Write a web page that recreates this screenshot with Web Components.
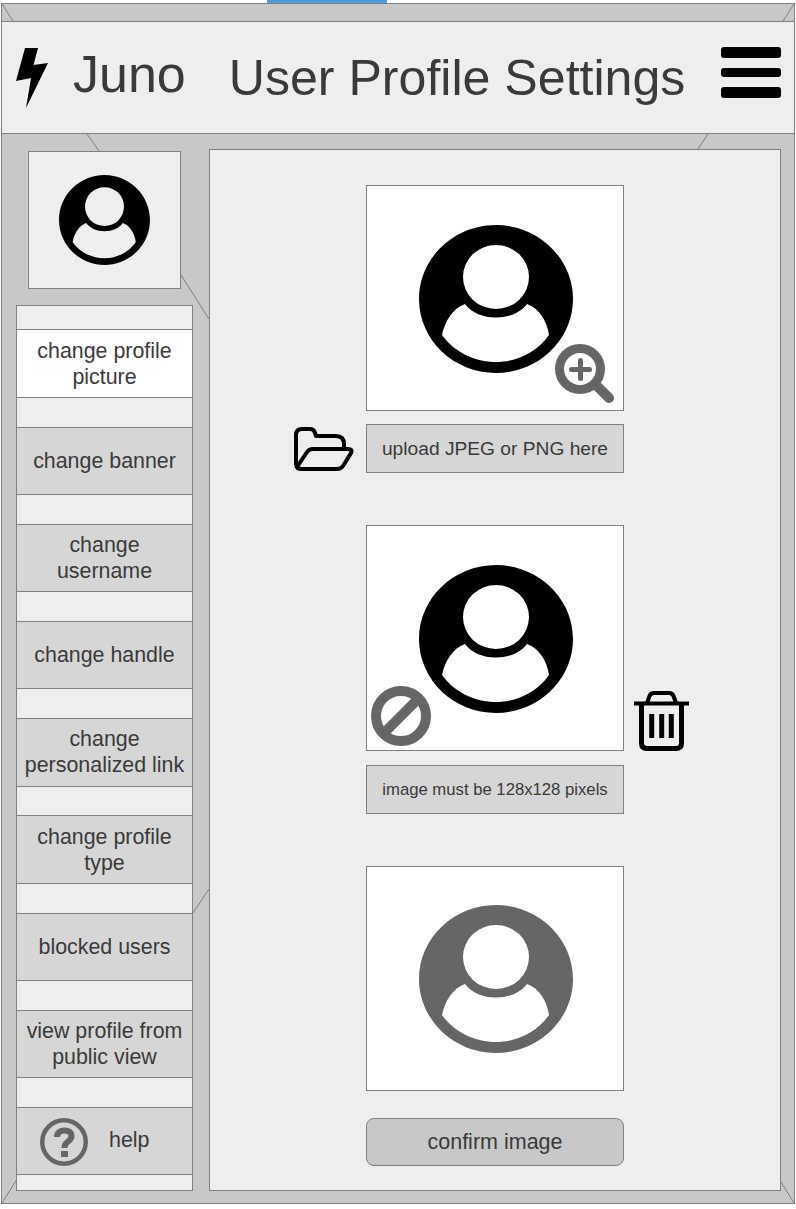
<!DOCTYPE html>
<html lang="en">
<head>
<meta charset="utf-8">
<title>Juno - User Profile Settings</title>
<style>
  html, body { margin: 0; background: #fff; }
  body { font-family: "Liberation Sans", Arial, sans-serif; color: #3a3a3a; }
</style>
</head>
<body>
<juno-progress></juno-progress>
<juno-frame>
  <juno-header slot="header" title-text="User Profile Settings"></juno-header>
  <juno-sidebar slot="sidebar">
    <juno-nav-item active>change profile<br>picture</juno-nav-item>
    <juno-nav-item>change banner</juno-nav-item>
    <juno-nav-item>change<br>username</juno-nav-item>
    <juno-nav-item>change handle</juno-nav-item>
    <juno-nav-item>change<br>personalized link</juno-nav-item>
    <juno-nav-item>change profile<br>type</juno-nav-item>
    <juno-nav-item>blocked users</juno-nav-item>
    <juno-nav-item>view profile from<br>public view</juno-nav-item>
    <juno-nav-item help>help</juno-nav-item>
  </juno-sidebar>
  <juno-settings slot="main">
    <juno-row>
      <juno-image-box>
        <juno-icon slot="overlay" name="zoom" style="right:8px;bottom:6px"></juno-icon>
      </juno-image-box>
    </juno-row>
    <juno-row center style="margin-top:13px">
      <juno-icon slot="left" name="folder"></juno-icon>
      <juno-caption>upload JPEG or PNG here</juno-caption>
    </juno-row>
    <juno-row style="margin-top:52px">
      <juno-image-box>
        <juno-icon slot="overlay" name="ban" style="left:4px;bottom:4px"></juno-icon>
      </juno-image-box>
      <juno-icon slot="right" name="trash"></juno-icon>
    </juno-row>
    <juno-row style="margin-top:14px">
      <juno-caption small>image must be 128x128 pixels</juno-caption>
    </juno-row>
    <juno-row style="margin-top:52px">
      <juno-image-box muted></juno-image-box>
    </juno-row>
    <juno-row style="margin-top:27px">
      <juno-button>confirm image</juno-button>
    </juno-row>
  </juno-settings>
</juno-frame>

<script>
const borderColor = "#808080";
const avatarPath =
  "M77 0C119 0 154 33 154 74C154 115 119 148 77 148C35 148 0 115 0 74C0 33 35 0 77 0Z" +
  "M77 20A33 32 0 1 0 77 84A33 32 0 1 0 77 20Z" +
  "M23 110C26 96 34 83 46 79C53 88 64 92.500 77 92.500C90 92.500 101 88 108 79C120 83 128 96 130 110" +
  "C118 127 98 137 77 137C56 137 35 127 23 110Z";

const icons = {
  zoom: `<svg width="60" height="60" viewBox="0 0 60 60" fill="none" stroke="#666">
      <circle cx="25" cy="25" r="20.500" stroke-width="9"/>
      <path d="M16.500 25.500H34.500M25.500 16.500V34.500" stroke-width="5" stroke-linecap="round"/>
      <path d="M41 41L54 54" stroke-width="10" stroke-linecap="round"/>
    </svg>`,
  ban: `<svg width="60" height="60" viewBox="0 0 60 60" fill="none" stroke="#666" stroke-width="10">
      <circle cx="30" cy="30" r="25"/>
      <path d="M14 46L46 14"/>
    </svg>`,
  folder: `<svg width="60" height="44" viewBox="0 0 60 44" fill="none" stroke="#000" stroke-width="4" stroke-linejoin="round">
      <path d="M2 38V8Q2 2 8 2H16Q20 2 21 6L22 9H42Q50 9 50 17V21"/>
      <path d="M3 40L13 25Q15 22 19 22H54Q59 22 57 26L49 39Q47 42 43 42H7Q3 42 2 38"/>
    </svg>`,
  trash: `<svg width="55" height="60" viewBox="0 0 55 60" fill="none" stroke="#000">
      <path d="M0 12.500H55" stroke-width="4"/>
      <path d="M13 12L15.500 5Q16.500 2 20 2H35Q38.500 2 39.500 5L42 12" stroke-width="4"/>
      <path d="M7.500 13V52Q7.500 57.500 13 57.500H42Q47.500 57.500 47.500 52V13" stroke-width="5"/>
      <path d="M17.700 23V47M27.700 23V47M37.300 23V47" stroke-width="5"/>
    </svg>`,
  help: `<svg width="48" height="48" viewBox="0 0 48 48" fill="none" stroke="#666">
      <circle cx="24" cy="24" r="21.750" stroke-width="4.500"/>
      <path d="M17 19C17 14.500 20 12.500 24.500 12.500C29 12.500 31.500 14.500 31.500 18C31.500 21.500 28.500 23 27 24.500C25.500 25.500 24.500 27 24.500 30" stroke-width="6"/>
      <rect x="21" y="33" width="7" height="6" fill="#666" stroke="none"/>
    </svg>`,
};

// every element is the same thing: a template in a shadow root
class JunoElement extends HTMLElement {
  constructor(html) {
    super();
    this.attachShadow({ mode: "open" });
    this.shadowRoot.innerHTML = html;
  }
}

class JunoProgress extends JunoElement {
  constructor() {
    super(`<style>
      :host { display: block; width: 120px; height: 3px; margin-left: 267px; background: #4d9de0; }
    </style>`);
  }
}

class JunoFrame extends JunoElement {
  constructor() {
    super(`<style>
      :host {
        display: flex; flex-direction: column; position: relative; box-sizing: border-box;
        width: 794px; height: 1201px; margin-left: 1px; padding-top: 17px;
        background: #c8c8c8; border: 1px solid ${borderColor};
      }
      .body { flex: 1; display: flex; gap: 16px; padding: 15px 13px 12px 14px; min-height: 0; }
      svg { position: absolute; left: -2px; top: -4px; pointer-events: none; }
    </style>
    <slot name="header"></slot>
    <div class="body">
      <slot name="sidebar"></slot>
      <slot name="main"></slot>
    </div>
    <svg width="796" height="1209" viewBox="0 0 796 1209" stroke="${borderColor}" fill="none">
      <path d="M2 4L13 21M794 4L783 21M87 134L99 151M708 134L698 149"/>
      <path d="M181 275L209 319M193 913L209 889M2 1203L16.500 1180M781 1182L794 1203"/>
    </svg>`);
  }
}

class JunoHeader extends JunoElement {
  constructor() {
    super(`<style>
      :host {
        display: flex; align-items: center; box-sizing: border-box; height: 113px;
        padding: 0 13px 0 14px; background: #eee;
        border-top: 1px solid ${borderColor}; border-bottom: 1px solid ${borderColor};
      }
      svg { flex: none; }
      .brand { font-size: 52px; margin: 0 43px 7px 25px; }
      .title { font-size: 50.100px; padding-top: 1px; white-space: nowrap; }
      .menu { display: flex; flex-direction: column; margin: 0 0 10px auto; width: 60px; }
      .menu i { display: block; background: #000; border-radius: 3px; }
    </style>
    <svg width="32" height="60" viewBox="0 0 32 60">
      <path d="M9 0H22L17.500 17L32 15L10 60L15 30L0 33Z"/>
    </svg>
    <span class="brand">Juno</span>
    <span class="title"></span>
    <div class="menu">
      <i style="height:11px"></i>
      <i style="height:9px;margin-top:10px"></i>
      <i style="height:11px;margin-top:10px"></i>
    </div>`);
  }
  connectedCallback() {
    this.shadowRoot.querySelector(".title").textContent = this.getAttribute("title-text");
  }
}

class JunoAvatar extends JunoElement {
  constructor() {
    super(`<style>
      :host { display: block; line-height: 0; }
      svg { fill: var(--avatar-fill, #000); }
    </style>
    <svg viewBox="0 0 154 148" preserveAspectRatio="none"><path fill-rule="evenodd" d="${avatarPath}"/></svg>`);
  }
  connectedCallback() {
    const svg = this.shadowRoot.querySelector("svg");
    svg.setAttribute("width", this.getAttribute("width") || 154);
    svg.setAttribute("height", this.getAttribute("height") || 148);
  }
}

class JunoSidebar extends JunoElement {
  constructor() {
    super(`<style>
      :host { display: flex; flex-direction: column; flex: none; width: 177px; height: 100%; }
      .picture {
        box-sizing: border-box; width: 153px; height: 138px; margin: 2px 0 16px 12px;
        display: flex; align-items: center; justify-content: center;
        background: #eee; border: 1px solid ${borderColor};
      }
      nav {
        flex: 1; box-sizing: border-box; display: flex; flex-direction: column; gap: 28.800px;
        padding-top: 23.400px; background: #eee; border: 1px solid ${borderColor};
      }
    </style>
    <div class="picture"><juno-avatar width="91" height="90"></juno-avatar></div>
    <nav><slot></slot></nav>`);
  }
}

class JunoNavItem extends JunoElement {
  constructor() {
    super(`<style>
      :host {
        display: flex; align-items: center; justify-content: center; box-sizing: border-box;
        height: 68.400px; text-align: center; font-size: 21.400px; line-height: 26px;
        background: #d6d6d6; border-top: 1px solid ${borderColor}; border-bottom: 1px solid ${borderColor};
      }
      :host([active]) { background: #fff; }
      :host([help]) { justify-content: flex-start; padding-left: 23px; gap: 21px; }
      .icon { display: none; line-height: 0; margin-top: 2px; }
      :host([help]) .icon { display: block; }
      :host([help]) .label { margin-bottom: 2px; }
    </style>
    <span class="icon">${icons.help}</span>
    <span class="label"><slot></slot></span>`);
  }
}

class JunoSettings extends JunoElement {
  constructor() {
    super(`<style>
      :host {
        display: flex; flex-direction: column; flex: 1; box-sizing: border-box; height: 100%;
        padding: 35px 0 0 84px; background: #eee; border: 1px solid ${borderColor};
      }
    </style>
    <slot></slot>`);
  }
}

class JunoRow extends JunoElement {
  constructor() {
    super(`<style>
      :host { display: flex; align-items: flex-end; }
      :host([center]) { align-items: center; }
      .left { flex: none; width: 60px; margin-right: 12px; line-height: 0; }
      .right { margin-left: 10px; line-height: 0; }
    </style>
    <div class="left"><slot name="left"></slot></div>
    <slot></slot>
    <div class="right"><slot name="right"></slot></div>`);
  }
}

class JunoImageBox extends JunoElement {
  constructor() {
    super(`<style>
      :host {
        display: flex; align-items: center; justify-content: center; position: relative;
        box-sizing: border-box; width: 258px; height: 226px; padding: 2px 0 0 2px;
        background: #fff; border: 1px solid ${borderColor};
      }
      :host([muted]) { height: 225px; padding-top: 1px; --avatar-fill: #666; }
    </style>
    <juno-avatar></juno-avatar>
    <slot name="overlay"></slot>`);
  }
}

class JunoIcon extends JunoElement {
  constructor() {
    super(`<style>
      :host { display: inline-block; line-height: 0; }
      :host([slot="overlay"]) { position: absolute; }
    </style>
    <span></span>`);
  }
  connectedCallback() {
    this.shadowRoot.querySelector("span").innerHTML = icons[this.getAttribute("name")];
  }
}

class JunoCaption extends JunoElement {
  constructor() {
    super(`<style>
      :host {
        display: flex; align-items: center; justify-content: center; box-sizing: border-box;
        width: 258px; height: 49px; font-size: 19.200px; white-space: nowrap;
        background: #d6d6d6; border: 1px solid ${borderColor};
      }
      :host([small]) { font-size: 16.700px; }
    </style>
    <slot></slot>`);
  }
}

class JunoButton extends JunoElement {
  constructor() {
    super(`<style>
      :host {
        display: flex; align-items: center; justify-content: center; box-sizing: border-box;
        width: 258px; height: 48px; font-size: 21.500px; cursor: pointer;
        background: #c8c8c8; border: 1px solid ${borderColor}; border-radius: 8px;
      }
    </style>
    <slot></slot>`);
  }
}

customElements.define("juno-progress", JunoProgress);
customElements.define("juno-frame", JunoFrame);
customElements.define("juno-header", JunoHeader);
customElements.define("juno-avatar", JunoAvatar);
customElements.define("juno-sidebar", JunoSidebar);
customElements.define("juno-nav-item", JunoNavItem);
customElements.define("juno-settings", JunoSettings);
customElements.define("juno-row", JunoRow);
customElements.define("juno-image-box", JunoImageBox);
customElements.define("juno-icon", JunoIcon);
customElements.define("juno-caption", JunoCaption);
customElements.define("juno-button", JunoButton);
</script>
</body>
</html>
